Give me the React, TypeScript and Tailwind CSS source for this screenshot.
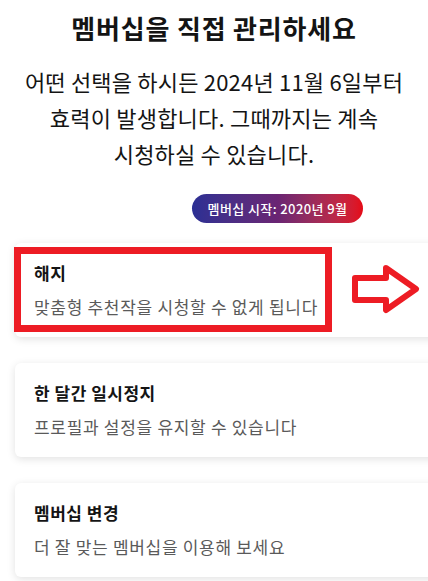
import React from 'react';

const options = [
  { title: '해지', desc: '맞춤형 추천작을 시청할 수 없게 됩니다', marked: true },
  { title: '한 달간 일시정지', desc: '프로필과 설정을 유지할 수 있습니다', marked: false },
  { title: '멤버십 변경', desc: '더 잘 맞는 멤버십을 이용해 보세요', marked: false },
];

const App: React.FC = () => {
  return (
    <div
      className="w-[428px] h-[581px] overflow-hidden bg-white text-[#141414]"
      style={{ fontFamily: '"Noto Sans CJK KR", "Noto Sans", sans-serif' }}
    >
      <h1 className="pt-[10px] text-center text-[26px] leading-[36px] font-bold tracking-[0.8px]">
        멤버십을 직접 관리하세요
      </h1>

      <p className="mt-[17px] text-center text-[22px] leading-[36px] tracking-[0.2px] text-[#141414]">
        어떤 선택을 하시든 2024년 11월 6일부터
        <br />
        효력이 발생합니다. 그때까지는 계속
        <br />
        시청하실 수 있습니다.
      </p>

      <div className="mt-[23px] flex justify-end pr-[65px]">
        <span className="h-[29px] w-[171px] flex items-center justify-center rounded-full bg-gradient-to-r from-[#2b2f94] via-[#6a2473] to-[#e50914] text-white text-[13px] font-medium tracking-[0.4px]">
          멤버십 시작: 2020년 9월
        </span>
      </div>

      {/* Options */}
      <div className="mt-[20px] pl-[15px] flex flex-col gap-[26px]">
        {options.map((opt) => (
          <div key={opt.title} className="relative w-[440px]">
            <div className="h-[94px] rounded-md bg-white shadow-[0_2px_8px_rgba(0,0,0,0.12)] px-[19px] pt-[18px]">
              <p className="text-[17px] leading-[24px] font-bold tracking-[0.5px] text-[#141414]">{opt.title}</p>
              <p className="mt-[10px] text-[17px] leading-[24px] tracking-[0.7px] text-[#5a5a5a]">{opt.desc}</p>
            </div>
            {opt.marked && (
              <>
                <div className="absolute left-[-1px] top-[4px] w-[318px] h-[85px] border-[7px] border-[#ed1c24]" />
                <svg
                  className="absolute left-[333px] top-[18px]"
                  width="76"
                  height="56"
                  viewBox="0 0 76 56"
                >
                  <polygon
                    points="7,17 38,17 38,7 68,28 38,49 38,39 7,39"
                    fill="white"
                    stroke="#ed1c24"
                    strokeWidth="6"
                    strokeLinejoin="round"
                  />
                </svg>
              </>
            )}
          </div>
        ))}
      </div>
    </div>
  );
};

export default App;
